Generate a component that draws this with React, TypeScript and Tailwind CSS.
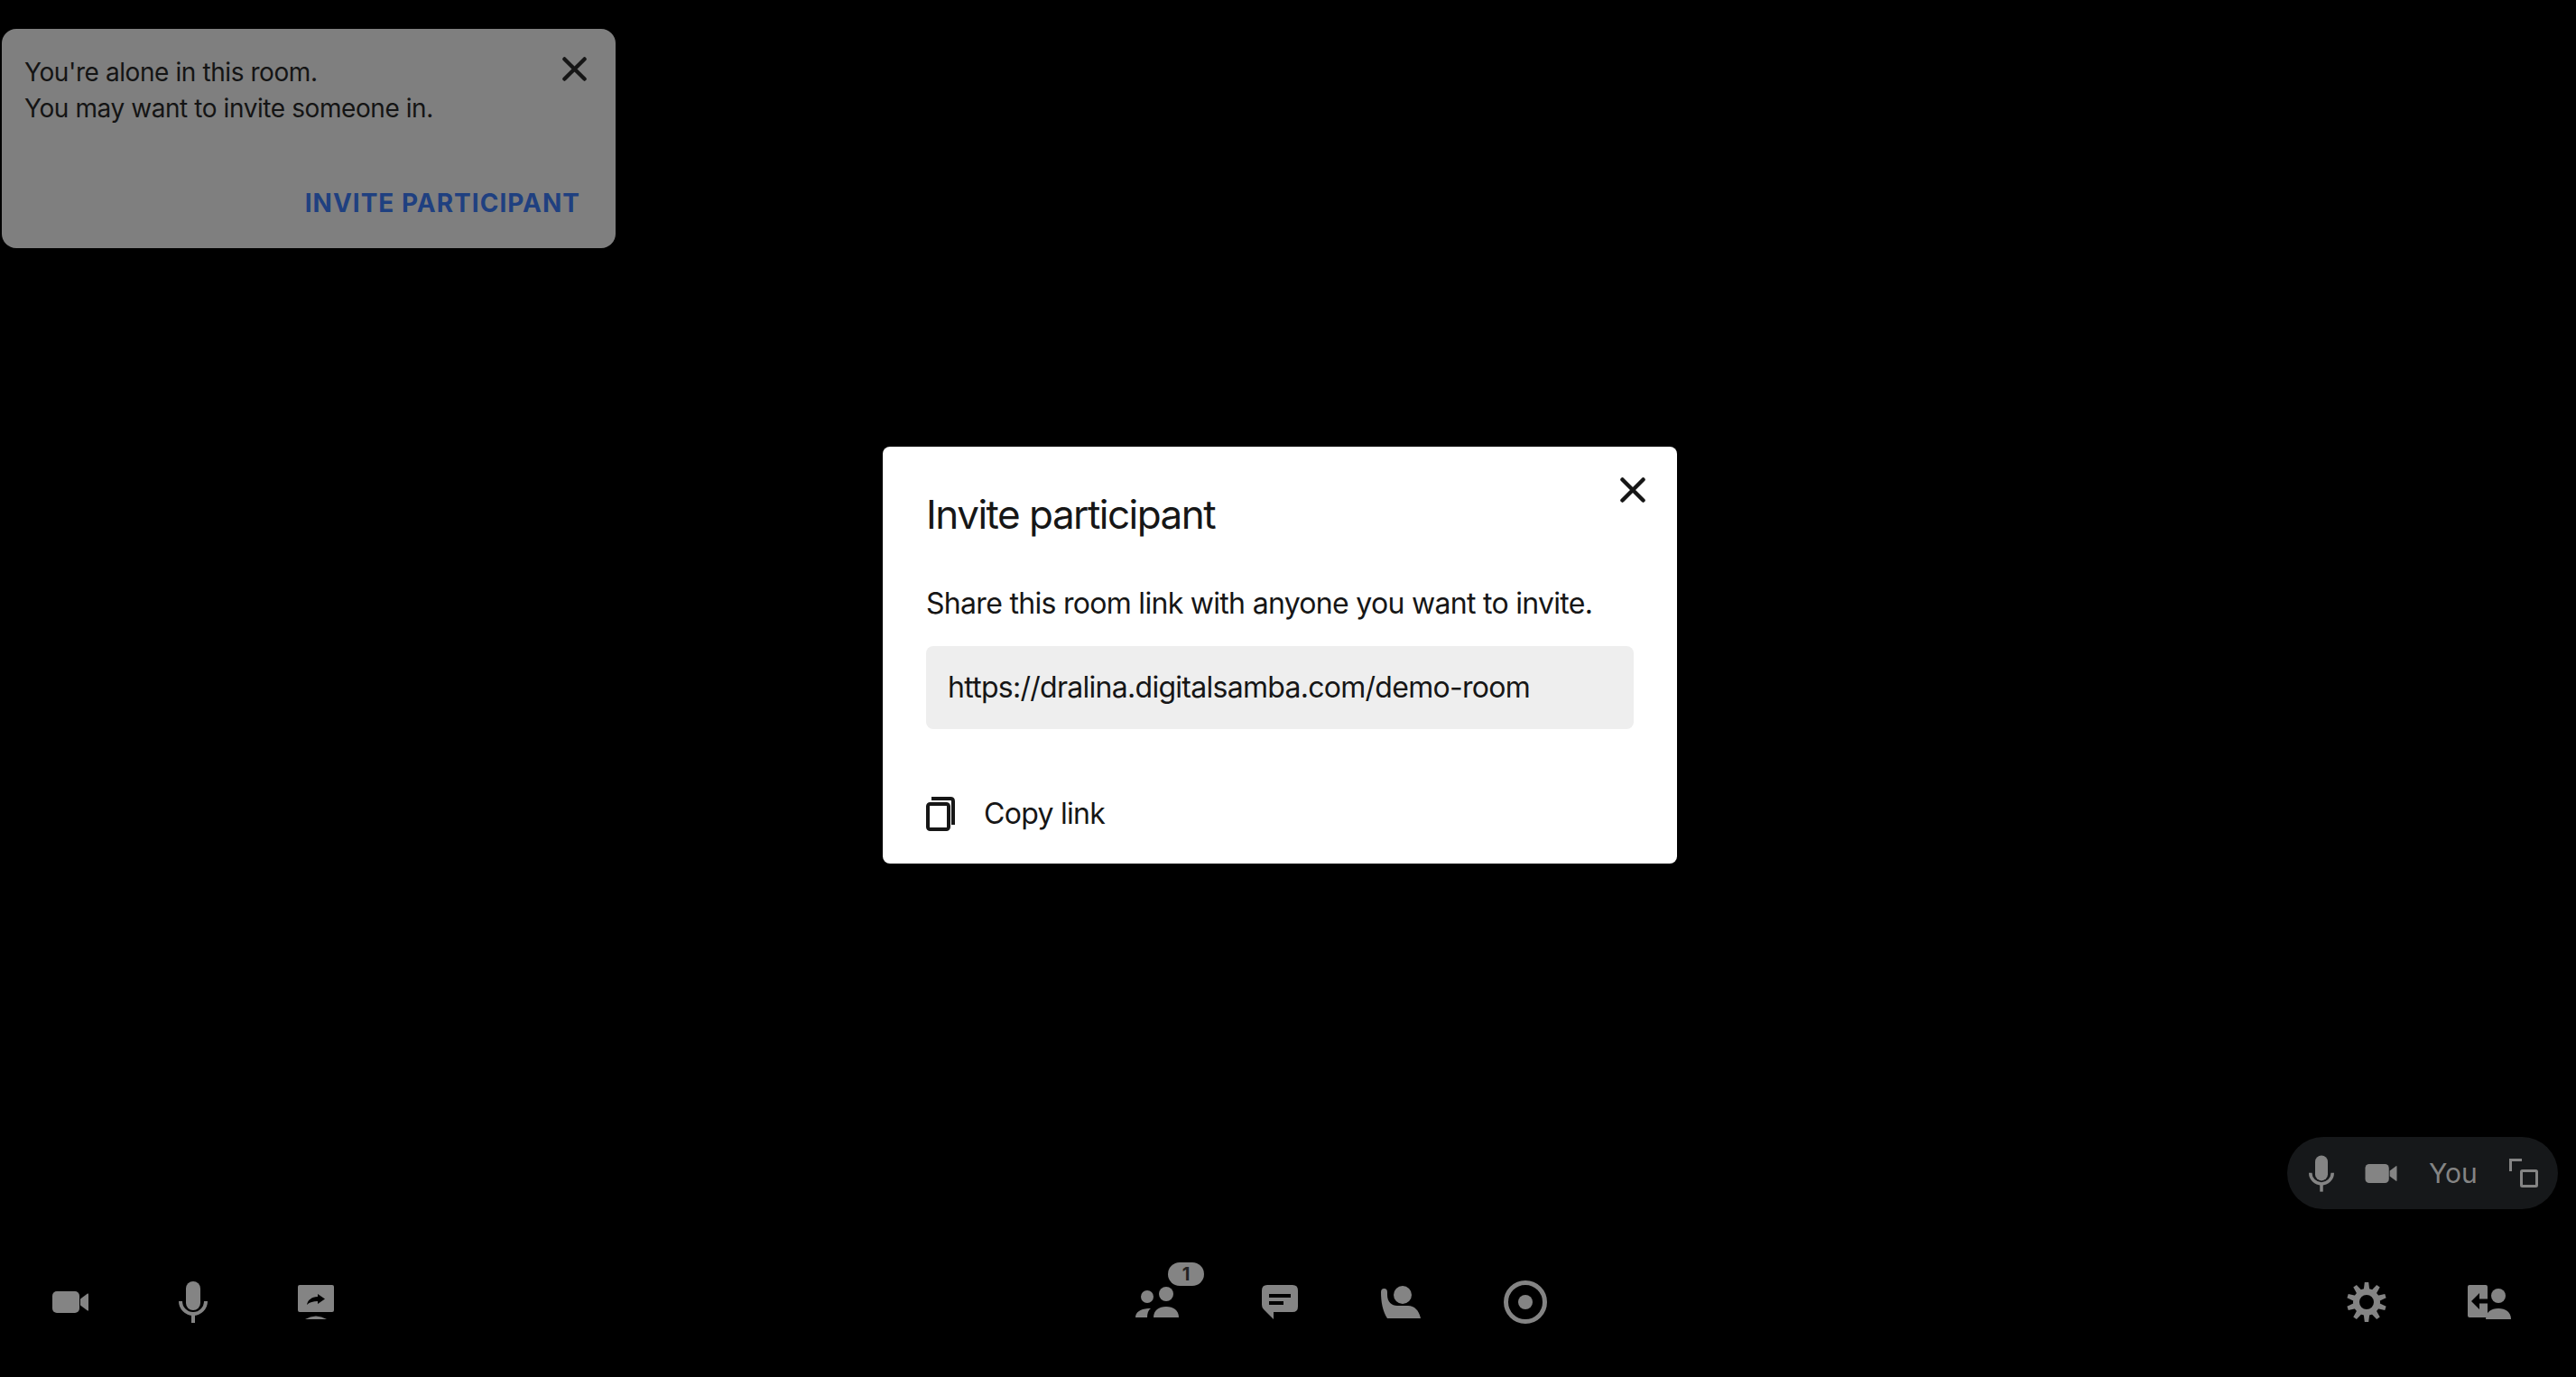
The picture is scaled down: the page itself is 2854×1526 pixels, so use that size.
const G = "#848484";
const D = "#161616";

function Camera({ w = 40, h = 24 }: { w?: number; h?: number }) {
  return (
    <svg width={w} height={h} viewBox="0 0 40 24" fill={G}>
      <rect x="0" y="0" width="30" height="24" rx="5" />
      <path d="M31 8.5 39 2.5Q40 2 40 3.5V20.5Q40 22 39 21.5L31 15.5Z" />
    </svg>
  );
}

function Mic({ w = 32, h = 46 }: { w?: number; h?: number }) {
  return (
    <svg width={w} height={h} viewBox="0 0 32 46" fill={G}>
      <rect x="8" y="0" width="16" height="32" rx="8" />
      <path d="M2 22A14 14 0 0 0 30 22" fill="none" stroke={G} strokeWidth="4" />
      <rect x="14" y="37" width="4" height="9" />
    </svg>
  );
}

function ScreenShare() {
  return (
    <svg width="40" height="38" viewBox="0 0 40 38" fill={G}>
      <rect x="0" y="0" width="40" height="30" rx="2" />
      <path d="M8 38Q20 31 32 38Z" />
      <path
        fill="#000"
        d="M30 15.5 22 10V13C15 13.5 11 16.5 10 22 13 19 17 18 22 18V21Z"
      />
    </svg>
  );
}

function People() {
  return (
    <svg width="48" height="34" viewBox="0 0 48 34" fill={G}>
      <circle cx="13" cy="11" r="7" />
      <circle cx="34" cy="8" r="8" />
      <path d="M20 34C20 26 26 22 34 22 42 22 48 26 48 34Z" />
      <path d="M0 34C0 28 6 24 17 24 14 26 13 30 13 34Z" />
    </svg>
  );
}

function Chat() {
  return (
    <svg width="40" height="38" viewBox="0 0 40 38" fill={G}>
      <path d="M6 0H34Q40 0 40 6V24Q40 30 34 30H13V38L2 27Q0 25 0 22V6Q0 0 6 0Z" />
      <rect x="8" y="10" width="24" height="4" fill="#000" />
      <rect x="8" y="18" width="16" height="4" fill="#000" />
    </svg>
  );
}

function Seat() {
  return (
    <svg className="mr-[4px]" width="44" height="36" viewBox="0 0 44 36" fill={G}>
      <circle cx="24" cy="10" r="10" />
      <path d="M0 7Q0 3 3.500 3 7 3 7 7V10C7 18 12 22 18 22H30C37 22 42 27 44 36H7C2 28 0 18 0 7Z" />
    </svg>
  );
}

function RecordIcon() {
  return (
    <svg width="48" height="48" viewBox="0 0 48 48" fill={G}>
      <circle cx="24" cy="24" r="21.500" fill="none" stroke={G} strokeWidth="5" />
      <circle cx="24" cy="24" r="8" />
    </svg>
  );
}

function Gear() {
  const angles = [0, 36, 72, 108, 144, 180, 216, 252, 288, 324];
  return (
    <svg width="44" height="44" viewBox="-22 -22 44 44" fill={G}>
      <circle r="11.500" fill="none" stroke={G} strokeWidth="7" />
      {angles.map((a) => (
        <path key={a} d="M-3.200 -14 -2.200 -22H2.200L3.200 -14Z" transform={`rotate(${a})`} />
      ))}
    </svg>
  );
}

function Leave() {
  return (
    <svg width="48" height="38" viewBox="0 0 48 38" fill={G}>
      <rect x="0" y="0" width="22" height="36" rx="2" />
      <path fill="#000" d="M4 18 13 9V15.500H22V20.500H13V27Z" />
      <circle cx="34" cy="12" r="8" />
      <path d="M20 38C20 30 26 26 34 26 42 26 48 30 48 38Z" />
    </svg>
  );
}

function Expand() {
  return (
    <svg width="32" height="32" viewBox="0 0 32 32" fill="none" stroke={G} strokeWidth="3">
      <path d="M1.500 14V1.500H14" />
      <rect x="13.500" y="13.500" width="17" height="17" rx="1" />
    </svg>
  );
}

function Close({ w, h }: { w: number; h: number }) {
  return (
    <svg width={w} height={h} viewBox="0 0 28 28" fill="none" stroke={D} strokeWidth="4.500" strokeLinecap="round">
      <path d="M2.500 2.500 25.500 25.500M25.500 2.500 2.500 25.500" />
    </svg>
  );
}

function CopyIcon() {
  return (
    <svg width="32" height="38" viewBox="0 0 32 38" fill="none" stroke={D} strokeWidth="4">
      <rect x="2" y="8" width="23" height="28" rx="2.500" />
      <path d="M6 2H27Q30 2 30 5V31" />
    </svg>
  );
}

function BarButton({ children }: { children: React.ReactNode }) {
  return <div className="relative flex h-16 w-[136px] items-center justify-center">{children}</div>;
}

export default function App() {
  return (
    <div className="relative flex h-screen w-full flex-col justify-end overflow-hidden bg-black font-['Inter',sans-serif]">
      <div className="absolute left-[2px] top-[32px] h-[243px] w-[680px] rounded-[16px] bg-[#7f7f7f] pl-[25px] pr-[39px] pt-[28px] text-[#141414]">
        <div className="absolute right-[32px] top-[31px]">
          <Close w={27} h={27} />
        </div>
        <p className="text-[28px] leading-[40px] tracking-[-0.42px]">You're alone in this room.</p>
        <p className="text-[28px] leading-[40px] tracking-[-0.42px]">You may want to invite someone in.</p>
        <div className="mt-[65px] text-right text-[28px] font-bold leading-[40px] tracking-[1px] text-[#1f4080]">
          INVITE PARTICIPANT
        </div>
      </div>

      <div className="absolute inset-0 flex items-center justify-center pb-[74px] pr-[18px]">
        <div className="relative flex h-[462px] w-[880px] flex-col rounded-lg bg-white px-[48px] text-[#161616]">
          <div className="absolute right-[35px] top-[34px]">
            <Close w={28} h={28} />
          </div>
          <h2 className="mt-[48px] text-[44px] leading-[54px] tracking-[-1.5px]">Invite participant</h2>
          <p className="mt-[50px] text-[32px] leading-[44px] tracking-[-0.7px]">Share this room link with anyone you want to invite.</p>
          <div className="mt-[25px] flex h-[92px] items-center rounded-lg bg-[#eeeeee] px-[24px] text-[32px] tracking-[-0.72px]">
            https://dralina.digitalsamba.com/demo-room
          </div>
          <div className="mt-[75px] flex h-[38px] items-center gap-[32px] text-[32px] tracking-[-0.7px]">
            <CopyIcon />
            <span>Copy link</span>
          </div>
        </div>
      </div>

      <div className="absolute bottom-[186px] right-[20px] flex h-[80px] w-[300px] items-center rounded-full bg-[#16181a] pl-[24px]">
        <Mic w={28} h={41} />
        <div className="ml-[34px]">
          <Camera w={36} h={21} />
        </div>
        <span className="ml-[35px] text-[30px] text-[#848484]">You</span>
        <div className="ml-auto mr-[22px]">
          <Expand />
        </div>
      </div>

      <div className="flex h-[166px] items-center justify-between pl-[10px] pr-[28px]">
        <div className="flex">
          <BarButton><Camera /></BarButton>
          <BarButton><Mic /></BarButton>
          <BarButton><ScreenShare /></BarButton>
        </div>
        <div className="flex">
          <BarButton>
            <People />
            <span className="absolute left-[80px] top-[-12px] flex h-[26px] w-[40px] items-center justify-center rounded-full bg-[#848484] text-[20px] font-bold text-[#222222]">
              1
            </span>
          </BarButton>
          <BarButton><Chat /></BarButton>
          <BarButton><Seat /></BarButton>
          <BarButton><RecordIcon /></BarButton>
        </div>
        <div className="flex">
          <BarButton><Gear /></BarButton>
          <BarButton><Leave /></BarButton>
        </div>
      </div>
    </div>
  );
}
